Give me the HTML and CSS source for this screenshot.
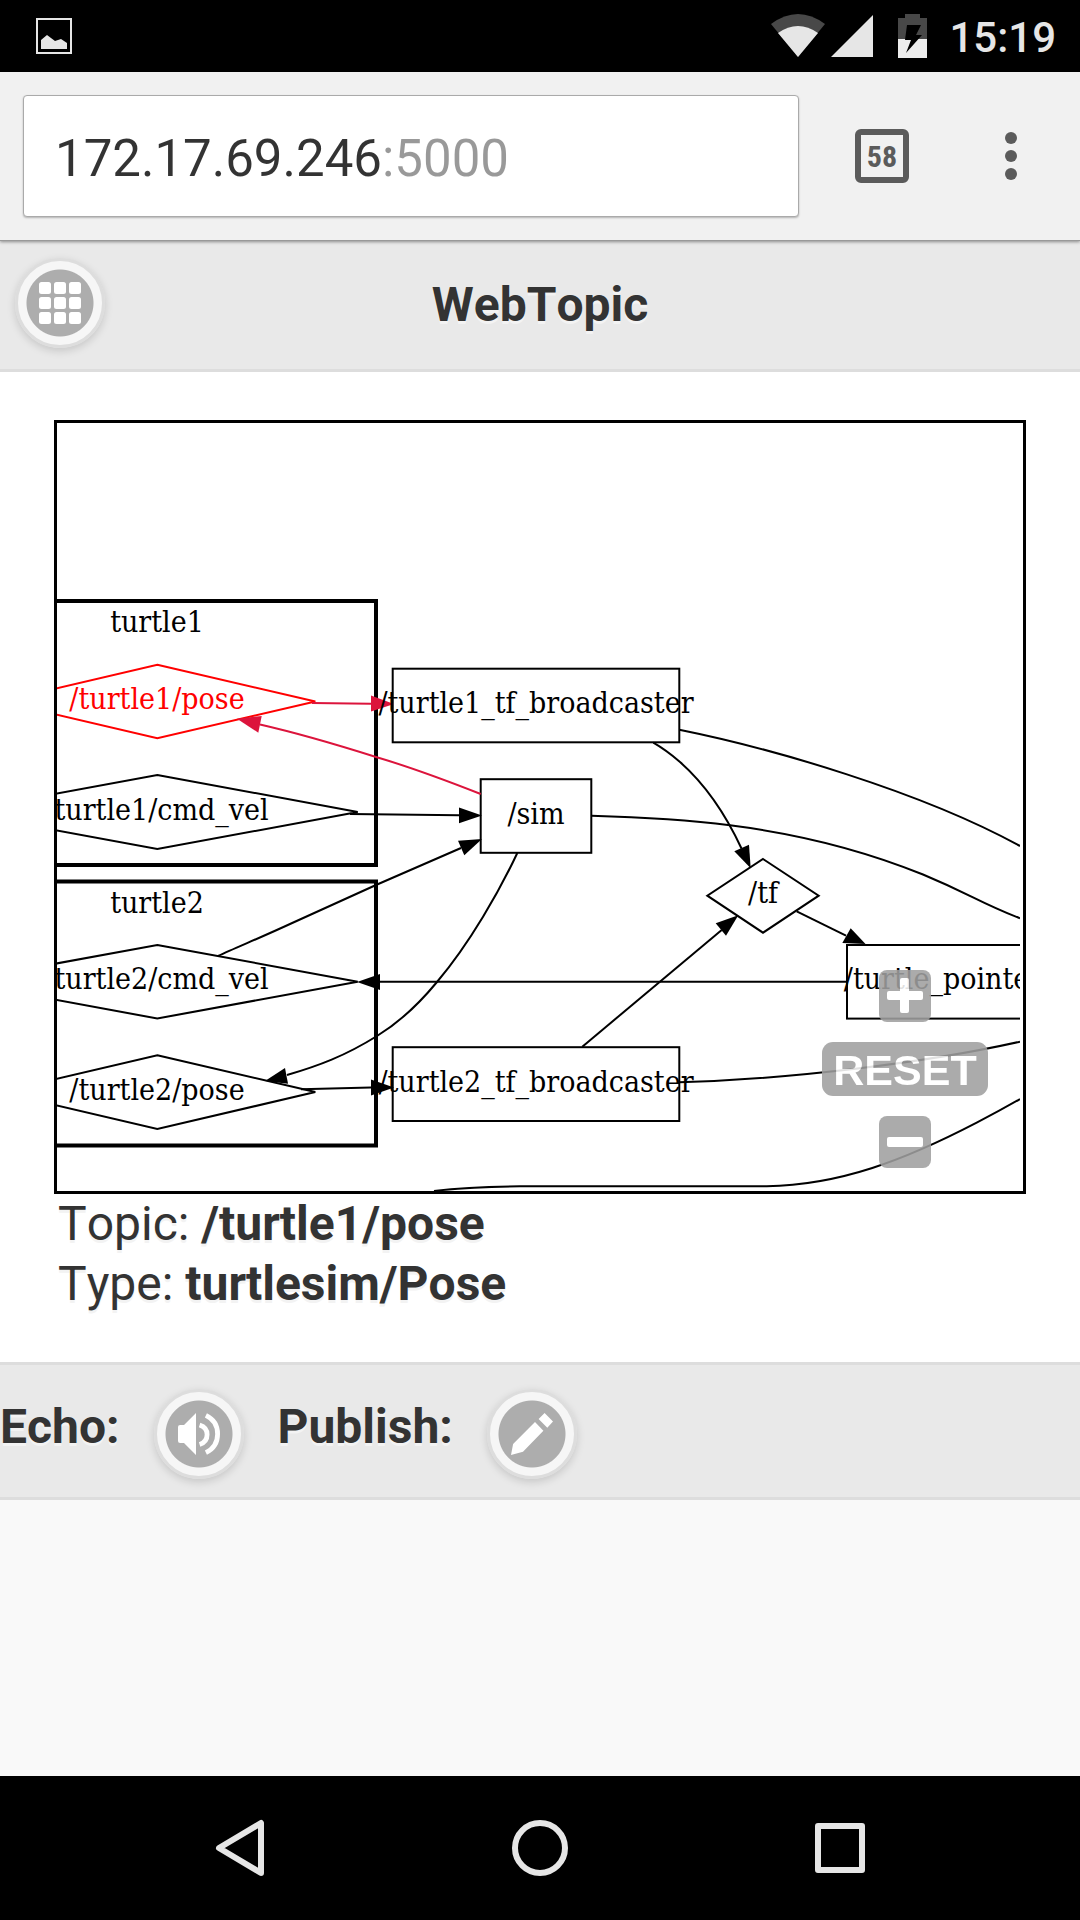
FILE: index.html
```html
<!DOCTYPE html>
<html lang="en">
<head>
<meta charset="utf-8">
<meta name="viewport" content="width=device-width">
<title>WebTopic</title>
<link rel="stylesheet" href="styles.css">
</head>
<body>
<div class="status-bar">
  <svg class="status-picture" width="36" height="36" viewBox="0 0 36 36" aria-hidden="true">
    <rect x="1" y="1" width="34" height="34" fill="none" stroke="#e6e6e6" stroke-width="2"/>
    <path d="M5 31V22L11 17L19 23L25 21L31 25V31Z" fill="#e6e6e6"/>
  </svg>
  <svg width="54" height="44" viewBox="0 0 54 44" aria-hidden="true">
    <path d="M27 43L0 10Q27 -10 54 10Z" fill="#484848"/>
    <path d="M27 43L7 19Q27 5 47 19Z" fill="#e6e6e6"/>
  </svg>
  <svg class="status-signal" width="42" height="42" viewBox="0 0 42 42" aria-hidden="true"><path d="M42 0V42H0Z" fill="#e6e6e6"/></svg>
  <svg class="status-battery" width="29" height="44" viewBox="0 0 29 44" aria-hidden="true">
    <path d="M0 4H7V0H22V4H29V25H0Z" fill="#484848"/>
    <path d="M0 25H29V44H0Z" fill="#ededed"/>
    <path d="M9 11H23L18 21H24L8 39L13 26H7Z" fill="#000"/>
  </svg>
  <time class="clock">15:19</time>
</div>

<div class="browser-bar">
  <input class="address" type="text" value="172.17.69.246:5000" aria-label="Address">
  <button class="tabs-button" type="button" aria-label="Open tabs: 58">58</button>
  <button class="menu-button" type="button" aria-label="Menu">
    <svg width="12" height="48" viewBox="0 0 12 48" fill="#5b5b5b"><circle cx="6" cy="6" r="6"/><circle cx="6" cy="24" r="6"/><circle cx="6" cy="42" r="6"/></svg>
  </button>
</div>

<header class="page-header">
  <button class="round-button" type="button" aria-label="Topics">
    <svg width="42" height="42" viewBox="0 0 42 42" fill="#fff">
      <rect width="12" height="12" rx="2.5"/><rect x="15" width="12" height="12" rx="2.5"/><rect x="30" width="12" height="12" rx="2.5"/>
      <rect y="15" width="12" height="12" rx="2.5"/><rect x="15" y="15" width="12" height="12" rx="2.5"/><rect x="30" y="15" width="12" height="12" rx="2.5"/>
      <rect y="30" width="12" height="12" rx="2.5"/><rect x="15" y="30" width="12" height="12" rx="2.5"/><rect x="30" y="30" width="12" height="12" rx="2.5"/>
    </svg>
  </button>
  <h1 class="page-title">WebTopic</h1>
</header>

<main class="content">
  <div class="graph">
    <svg class="graph-canvas" viewBox="57 423 963 768" role="img" aria-label="Node graph">
      <g class="cluster">
        <path d="M20 601H376V865H20Z"/>
        <path d="M20 881.5H376V1145.5H20Z"/>
      </g>
      <g class="shape">
        <path class="selected" d="M157.3 664.7L315.3 701.5L157.3 738.3L0 701.5Z"/>
        <path d="M157.3 775L357.7 812L157.3 849L-43 812Z"/>
        <path d="M157.3 945L357.7 981.7L157.3 1018.5L-43 981.7Z"/>
        <path d="M157.3 1055.3L315.3 1092L157.3 1129L0 1092Z"/>
        <path d="M763 859L818.7 895.7L763 932.7L707.3 895.7Z"/>
        <rect x="392.7" y="668.7" width="286.6" height="73.6"/>
        <rect x="480.7" y="779.2" width="110.6" height="73.6"/>
        <rect x="392.7" y="1047.2" width="286.6" height="73.8"/>
        <rect x="847" y="945" width="250" height="73.6"/>
      </g>
      <g class="edge">
        <path d="M350 814L459 815.3"/>
        <path d="M218 956C235 948 262 937 290 924L376 885L461 848"/>
        <path d="M517.3 853C500 890 470 943 437 982C418 1005 400 1022 377 1036C345 1056 318 1066 287 1075"/>
        <path d="M301 1089.3L371 1087.5"/>
        <path d="M847 981.7H380"/>
        <path d="M679.3 729.7C770 748 920 791 1020 846"/>
        <path d="M653.3 742.7Q666 750 680 762C706 785 725 813 741.5 848.5"/>
        <path d="M591.3 815.7C640 817 690 820 730 825.3C791 833 860 849 923 874.5Q948 885 973 897.3T1020 918.3"/>
        <path d="M796.7 911.3L846 935.7"/>
        <path d="M582.3 1046.7L721.7 930"/>
        <path d="M679.3 1082.3C790 1079 925 1063 1020 1041.7"/>
        <path d="M434 1191Q470 1186.5 520 1186.3H766.7C840 1185 905 1160 976.7 1122.7Q999 1111 1020 1099"/>
      </g>
      <g class="arrow">
        <path d="M459 807.5L482 815.5L459 823.3Z"/>
        <path d="M458 840.7L482 839L464.3 855.3Z"/>
        <path d="M285 1068L265 1081L288 1083.7Z"/>
        <path d="M371 1079.5L394 1087.5L371 1095.5Z"/>
        <path d="M380 974L357 982L380 990Z"/>
        <path d="M734.3 851.3L750.7 868.3L749 844.7Z"/>
        <path d="M850.7 928.3L865.5 944L842.3 943Z"/>
        <path d="M715.7 923.3L738.3 915.3L726 935.7Z"/>
      </g>
      <g class="active-edge">
        <path class="active-line" d="M312 703L371 703.7"/>
        <path class="active-line" d="M480.7 794C440 778 410 767 376 757C335 744 297 733 260 724.5"/>
        <path d="M371 695.5L394 704L371 711.5Z"/>
        <path d="M261.7 716L237 718.7L258.3 732.7Z"/>
      </g>
      <g class="label">
        <text x="157" y="632">turtle1</text>
        <text class="label-selected" x="157" y="709">/turtle1/pose</text>
        <text x="157" y="820">/turtle1/cmd_vel</text>
        <text x="157" y="913">turtle2</text>
        <text x="157" y="989">/turtle2/cmd_vel</text>
        <text x="157" y="1100">/turtle2/pose</text>
        <text x="536" y="713">/turtle1_tf_broadcaster</text>
        <text x="536" y="824">/sim</text>
        <text x="763" y="903">/tf</text>
        <text x="536" y="1092">/turtle2_tf_broadcaster</text>
        <text x="943" y="989">/turtle_pointer</text>
      </g>
    </svg>
    <div class="zoom-controls">
      <button class="zoom-button" type="button" aria-label="Zoom in">
        <svg width="36" height="36" viewBox="0 0 36 36" fill="#fff"><rect y="13" width="36" height="9" rx="2"/><rect x="13" width="9" height="35" rx="2"/></svg>
      </button>
      <button class="zoom-button zoom-reset" type="button">RESET</button>
      <button class="zoom-button" type="button" aria-label="Zoom out">
        <svg width="36" height="36" viewBox="0 0 36 36" fill="#fff"><rect y="13" width="36" height="10" rx="2"/></svg>
      </button>
    </div>
  </div>
  <div class="details">
    <p class="detail">Topic: <b>/turtle1/pose</b></p>
    <p class="detail">Type: <b>turtlesim/Pose</b></p>
  </div>
</main>

<div class="action-bar">
  <label class="action-label" for="echo">Echo:</label>
  <button class="round-button" id="echo" type="button">
    <svg width="42" height="42" viewBox="0 0 14 14" aria-hidden="true">
      <path d="M2 4L6 0V14L2 10H.7Q0 10 0 9.3V4.7Q0 4 .7 4Z" fill="#fff"/>
      <path d="M7.2 4C8.8 4.5 9.7 5.6 9.7 7.2S8.8 10 7.2 10.5M9.3 .8C11.8 2 13.2 4.3 13.2 7S11.8 12 9.3 13.2" fill="none" stroke="#fff" stroke-width="1.6"/>
    </svg>
  </button>
  <label class="action-label" for="publish">Publish:</label>
  <button class="round-button" id="publish" type="button">
    <svg width="42" height="42" viewBox="0 0 14 14" fill="#fff" aria-hidden="true"><path d="M0 14L.7 10.3L8 3L10.8 5.9L4 12.9ZM9.2 2L11.2 0L14 2.8L12.1 4.9Z"/></svg>
  </button>
</div>

<nav class="system-nav" aria-label="System">
  <button class="nav-button" type="button" aria-label="Back">
    <svg width="50" height="58" viewBox="0 0 50 58"><path d="M46 4V54L4 29Z"/></svg>
  </button>
  <button class="nav-button" type="button" aria-label="Home">
    <svg width="58" height="58" viewBox="0 0 58 58"><circle cx="29" cy="29" r="25"/></svg>
  </button>
  <button class="nav-button" type="button" aria-label="Recent apps">
    <svg width="50" height="50" viewBox="0 0 50 50"><rect x="3" y="3" width="44" height="44"/></svg>
  </button>
</nav>
</body>
</html>
```
FILE: styles.css
```css
* { box-sizing: border-box; }

body {
  margin: 0;
  min-height: 100vh;
  display: flex;
  flex-direction: column;
  background: #f9f9f9;
  color: #333;
  font-family: Roboto, "Liberation Sans", sans-serif;
  font-size: 48px;
  font-kerning: none;
  line-height: 60px;
}

button {
  margin: 0;
  padding: 0;
  border: 0;
  background: none;
  font-family: inherit;
  display: flex;
  align-items: center;
  justify-content: center;
  flex: none;
}

svg { display: block; }

/* Status bar */
.status-bar {
  height: 72px;
  padding: 0 24px 0 36px;
  display: flex;
  align-items: center;
  background: #000;
  color: #e6e6e6;
}
.status-picture { margin-right: auto; }
.status-signal { margin-left: 6px; }
.status-battery { margin-left: 25px; }
.clock {
  margin-left: 22px;
  padding-top: 4px;
  font-size: 42px;
  font-weight: 500;
}

/* Browser bar */
.browser-bar {
  position: relative;
  display: flex;
  align-items: center;
  padding: 23px 42px 23px 23px;
  background: #f1f1f1;
  border-bottom: 1px solid #999;
  box-shadow: 0 1px 3px rgba(0, 0, 0, .4);
}
.address {
  flex: 1;
  min-width: 0;
  height: 122px;
  padding: 4px 31px 0;
  border: 1px solid #aaa;
  border-radius: 4px;
  box-shadow: 0 1px 2px rgba(0, 0, 0, .25);
  font-family: inherit;
  font-size: 51px;
  font-kerning: none;
  color: transparent;
  background:
    linear-gradient(to right, #333 360px, #999 360px) text,
    #fff;
}
.tabs-button {
  width: 54px;
  height: 54px;
  margin-left: 56px;
  border: 6px solid #5b5b5b;
  border-radius: 6px;
  color: #5b5b5b;
  font-family: "Roboto Condensed", Roboto, sans-serif;
  font-size: 30px;
  font-weight: 700;
}
.menu-button {
  width: 54px;
  height: 54px;
  margin-left: 75px;
}

/* Page header */
.page-header {
  display: grid;
  grid-template-columns: 90px 1fr 90px;
  align-items: center;
  padding: 17px 15px 21px;
  background: #e9e9e9;
  border-bottom: 3px solid #ddd;
}
.page-title {
  margin: 0;
  padding-top: 4px;
  font-size: 48px;
  text-align: center;
  text-shadow: 0 3px 0 #f3f3f3;
}
.round-button {
  width: 90px;
  height: 90px;
  border: 3px solid #ddd;
  border-radius: 50%;
  background: radial-gradient(circle, #adadad 33px, #f6f6f6 34px);
  box-shadow: 0 3px 9px rgba(0, 0, 0, .15);
}

/* Graph */
.content {
  padding: 48px 5%;
  background: #fff;
}
.graph {
  position: relative;
  padding-right: 3px;
  border: 3px solid #000;
}
.graph-canvas {
  width: 100%;
  height: auto;
}
.cluster { fill: none; stroke: #000; stroke-width: 4; }
.shape, .edge { fill: none; stroke: #000; stroke-width: 2; }
.selected { stroke: #f00; }
.active-edge { fill: #dc143c; }
.active-line { fill: none; stroke: #dc143c; stroke-width: 2; }
.label {
  font-family: "DejaVu Serif Condensed", "DejaVu Serif", serif;
  font-size: 30px;
  text-anchor: middle;
}
.label-selected { fill: #f00; }

.zoom-controls {
  position: absolute;
  right: 35px;
  bottom: 23px;
  display: flex;
  flex-direction: column;
  align-items: center;
  gap: 20px;
  opacity: .88;
}
.zoom-button {
  width: 52px;
  height: 52px;
  border-radius: 8px;
  background: #a0a0a0;
}
.zoom-reset {
  width: 166px;
  height: 54px;
  padding-top: 2px;
  border-radius: 11px;
  color: #fff;
  font-family: "Liberation Sans", sans-serif;
  font-size: 43px;
  font-weight: 700;
}

.details { padding-left: 4px; }
.detail {
  margin: 0;
  text-shadow: 0 3px 0 #f3f3f3;
}

/* Echo and publish */
.action-bar {
  display: flex;
  align-items: center;
  gap: 34px;
  padding: 24px 0 18px;
  background: #e9e9e9;
  border-top: 3px solid #ddd;
  border-bottom: 3px solid #ddd;
}
.action-label {
  padding-bottom: 14px;
  font-weight: 700;
  text-shadow: 0 3px 0 #f3f3f3;
}

/* System navigation */
.system-nav {
  height: 144px;
  margin-top: auto;
  padding: 0 90px;
  display: flex;
  background: #000;
}
.nav-button { flex: 1; }
.nav-button svg {
  fill: none;
  stroke: #e6e6e6;
  stroke-width: 6;
  stroke-linejoin: round;
}
```
